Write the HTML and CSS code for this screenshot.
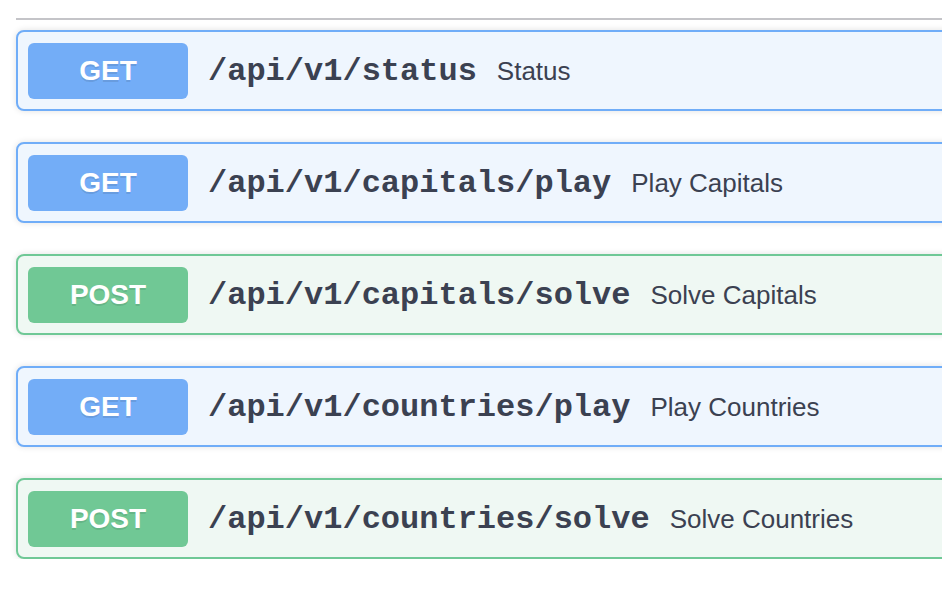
FILE: index.html
```html
<!DOCTYPE html>
<html>
<head>
<meta charset="utf-8">
<link rel="stylesheet" href="styles.css">
</head>
<body>
<div class="page">
  <div class="tag-line"></div>
  <div class="ops">
    <div class="opblock get">
      <span class="method">GET</span>
      <span class="path">/api/v1/status</span>
      <span class="desc">Status</span>
    </div>
    <div class="opblock get">
      <span class="method">GET</span>
      <span class="path">/api/v1/capitals/play</span>
      <span class="desc">Play Capitals</span>
    </div>
    <div class="opblock post">
      <span class="method">POST</span>
      <span class="path">/api/v1/capitals/solve</span>
      <span class="desc">Solve Capitals</span>
    </div>
    <div class="opblock get">
      <span class="method">GET</span>
      <span class="path">/api/v1/countries/play</span>
      <span class="desc">Play Countries</span>
    </div>
    <div class="opblock post">
      <span class="method">POST</span>
      <span class="path">/api/v1/countries/solve</span>
      <span class="desc">Solve Countries</span>
    </div>
  </div>
</div>
</body>
</html>
```
FILE: styles.css
```css
html, body {
  margin: 0;
  padding: 0;
  background: #ffffff;
  overflow: hidden;
}
.page {
  width: 1100px;
  padding: 18px 0 0 16px;
  font-family: "Liberation Sans", Arial, sans-serif;
}
.tag-line {
  height: 2px;
  background: #c4c4c8;
}
.ops {
  display: flex;
  flex-direction: column;
  gap: 31px;
  padding-top: 10px;
}
.opblock {
  display: flex;
  align-items: center;
  border: 2px solid #70adf8;
  border-radius: 8px;
  padding: 11px 10px 10px;
  background: #eff6fe;
  box-shadow: 0 0 6px rgba(0, 0, 0, 0.12);
}
.opblock.post {
  border-color: #6fc896;
  background: #eff8f3;
}
.method {
  display: block;
  width: 160px;
  padding: 12px 0;
  line-height: 32px;
  font-size: 28px;
  font-weight: 700;
  text-align: center;
  color: #ffffff;
  text-shadow: 0 2px 0 rgba(0, 0, 0, 0.1);
  background: #73adf7;
  border-radius: 6px;
}
.post .method {
  background: #70c895;
}
.path {
  padding: 0 20px;
  font-family: "Liberation Mono", "Courier New", monospace;
  font-weight: 700;
  font-size: 32px;
  color: #3b4151;
}
.desc {
  font-size: 26px;
  color: #3b4151;
}
```
